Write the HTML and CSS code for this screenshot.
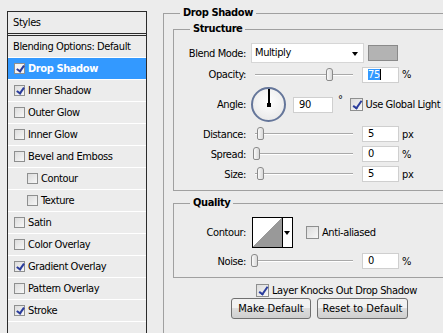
FILE: index.html
```html
<!DOCTYPE html>
<html lang="en">
<head>
  <meta charset="UTF-8">
  <title>Layer Style</title>
  <link rel="stylesheet" href="styles.css">
</head>
<body>
  <aside class="styles-panel">
    <div class="panel-head">Styles</div>
    <ul class="style-list">
      <li class="style-row plain">Blending Options: Default</li>
      <li class="style-row active"><span class="cb checked"></span>Drop Shadow</li>
      <li class="style-row"><span class="cb checked"></span>Inner Shadow</li>
      <li class="style-row"><span class="cb"></span>Outer Glow</li>
      <li class="style-row"><span class="cb"></span>Inner Glow</li>
      <li class="style-row"><span class="cb"></span>Bevel and Emboss</li>
      <li class="style-row sub"><span class="cb"></span>Contour</li>
      <li class="style-row sub"><span class="cb"></span>Texture</li>
      <li class="style-row"><span class="cb"></span>Satin</li>
      <li class="style-row"><span class="cb"></span>Color Overlay</li>
      <li class="style-row"><span class="cb checked"></span>Gradient Overlay</li>
      <li class="style-row"><span class="cb"></span>Pattern Overlay</li>
      <li class="style-row"><span class="cb checked"></span>Stroke</li>
      <li class="style-row"></li>
    </ul>
  </aside>

  <main class="settings">
    <fieldset class="group outer">
      <legend>Drop Shadow</legend>

      <fieldset class="group structure">
        <legend>Structure</legend>

        <div class="row r-blend">
          <span class="lbl">Blend Mode:</span>
          <div class="select">Multiply<span class="arrow"></span></div>
          <span class="swatch"></span>
        </div>

        <div class="row r-opacity">
          <span class="lbl">Opacity:</span>
          <div class="slider"><span class="thumb" style="left: 75px"></span></div>
          <div class="num"><span class="sel">75</span><span class="caret"></span></div>
          <span class="unit">%</span>
        </div>

        <div class="row r-angle">
          <span class="lbl">Angle:</span>
          <div class="dial"><span class="hand"></span><span class="pin"></span></div>
          <div class="num wide">90</div>
          <span class="deg">°</span>
          <span class="cb big checked"></span>
          <span class="cb-text">Use Global Light</span>
        </div>

        <div class="row r-small">
          <span class="lbl">Distance:</span>
          <div class="slider"><span class="thumb" style="left: 6px"></span></div>
          <div class="num">5</div>
          <span class="unit">px</span>
        </div>

        <div class="row r-small">
          <span class="lbl">Spread:</span>
          <div class="slider"><span class="thumb" style="left: 2px"></span></div>
          <div class="num">0</div>
          <span class="unit">%</span>
        </div>

        <div class="row r-small">
          <span class="lbl">Size:</span>
          <div class="slider"><span class="thumb" style="left: 6px"></span></div>
          <div class="num">5</div>
          <span class="unit">px</span>
        </div>
      </fieldset>

      <fieldset class="group quality">
        <legend>Quality</legend>

        <div class="row r-contour">
          <span class="lbl">Contour:</span>
          <div class="contour"><span class="curve"></span><span class="drop"><span class="arrow"></span></span></div>
          <span class="cb big"></span>
          <span class="cb-text">Anti-aliased</span>
        </div>

        <div class="row r-noise">
          <span class="lbl">Noise:</span>
          <div class="slider"><span class="thumb" style="left: 0px"></span></div>
          <div class="num">0</div>
          <span class="unit">%</span>
        </div>
      </fieldset>

      <div class="knockout">
        <span class="cb big checked"></span>
        <span class="cb-text">Layer Knocks Out Drop Shadow</span>
      </div>

      <div class="actions">
        <button class="btn make">Make Default</button>
        <button class="btn reset">Reset to Default</button>
      </div>
    </fieldset>
  </main>
</body>
</html>
```

FILE: styles.css
```css
body {
  margin: 0;
  height: 333px;
  overflow: hidden;
  display: flex;
  align-items: flex-start;
  background-color: #ececec;
  color: #000;
  font-family: "DejaVu Sans Condensed", "DejaVu Sans", "Liberation Sans", sans-serif;
  font-stretch: condensed;
  font-size: 11px;
  letter-spacing: -0.4px;
}

/* left list */
.styles-panel {
  margin: 11px 0 0 7px;
  width: 138px;
  height: 340px;
  border: 1px solid #2b2b2b;
  flex: none;
}
.panel-head {
  height: 21px;
  line-height: 21px;
  padding-left: 5px;
  border-bottom: 1px solid #2b2b2b;
  margin-bottom: 1px;
}
.style-list {
  list-style: none;
  margin: 0;
  padding: 0;
  border-top: 1px solid #2b2b2b;
}
.style-row {
  height: 21px;
  border-bottom: 1px solid #ffffff;
  display: flex;
  align-items: center;
  padding-left: 6px;
}
.style-row.plain {
  padding-left: 5px;
}
.style-row.sub {
  padding-left: 19px;
}
.style-row.active {
  background-color: #3399ff;
  color: #fff;
  font-weight: bold;
}
.style-row .cb {
  margin-right: 3px;
}

/* checkbox */
.cb {
  position: relative;
  flex: none;
  width: 11px;
  height: 11px;
  box-sizing: border-box;
  border: 1px solid #8e8f8f;
  background: linear-gradient(135deg, #dcdcdc, #f7f7f7);
}
.cb.big {
  width: 13px;
  height: 13px;
}
.style-row.active .cb {
  background: #f4f4f4;
}
.cb.checked::after {
  content: "";
  position: absolute;
  left: 3px;
  top: 0;
  width: 3px;
  height: 6px;
  border: solid #2a3c9c;
  border-width: 0 2px 2px 0;
  transform: rotate(35deg);
}
.cb.big.checked::after {
  left: 4px;
  top: 0;
  height: 8px;
}
.cb-text {
  margin-left: 3px;
  white-space: nowrap;
}

/* right side groups */
.settings {
  margin-left: 16px;
  padding-top: 6px;
  flex: none;
}
.group {
  margin: 0;
  border: 1px solid #a0a0a0;
  min-inline-size: 0;
}
.group legend {
  font-weight: bold;
  line-height: 14px;
  padding: 0 3px;
}
.outer {
  width: 320px;
  height: 400px;
  padding: 0 0 0 9px;
}
.outer > legend {
  margin-left: 7px;
}
.structure,
.quality {
  width: 300px;
  padding: 7px 0 8px 0;
}
.structure > legend,
.quality > legend {
  margin-left: 16px;
}
.structure {
  margin-top: 2px;
}
.quality {
  margin-top: 5px;
}

.row {
  display: flex;
  align-items: center;
  margin-top: 4px;
  white-space: nowrap;
}
.row:first-of-type {
  margin-top: 0;
}
.lbl {
  width: 72px;
  flex: none;
  text-align: right;
}
.r-blend { height: 20px; }
.r-opacity { height: 17px; margin-top: 3px; }
.r-angle { height: 35px; }
.r-small { height: 16px; }
.r-contour { height: 31px; }
.r-noise { height: 16px; margin-top: 5px; }

.select {
  position: relative;
  margin-left: 5px;
  width: 113px;
  height: 20px;
  box-sizing: border-box;
  border: 1px solid #d6d6d6;
  background: #fff;
  line-height: 18px;
  padding-left: 3px;
}
.arrow {
  position: absolute;
  right: 5px;
  top: 8px;
  border-left: 3px solid transparent;
  border-right: 3px solid transparent;
  border-top: 4px solid #000;
}
.swatch {
  margin-left: 4px;
  width: 30px;
  height: 16px;
  box-sizing: border-box;
  border: 1px solid #8a8a8a;
  background: #b3b3b3;
}

.slider {
  position: relative;
  margin-left: 5px;
  width: 107px;
  height: 16px;
  flex: none;
}
.slider::before {
  content: "";
  position: absolute;
  left: 4px;
  right: 5px;
  top: 7px;
  height: 1px;
  border-top: 1px solid #a9a9a9;
  background: #fff;
}
.thumb {
  position: absolute;
  top: 1px;
  width: 7px;
  height: 13px;
  box-sizing: border-box;
  border: 1px solid #8a8a8a;
  border-radius: 3px 3px 2px 2px;
  background: linear-gradient(90deg, #fafafa, #d8d8d8);
}

.num {
  margin-left: 4px;
  width: 37px;
  height: 16px;
  box-sizing: border-box;
  border: 1px solid #cfcfcf;
  background: #fff;
  padding-left: 5px;
  line-height: 14px;
  display: flex;
  align-items: center;
}
.num.wide {
  margin-left: 7px;
  width: 40px;
}
.sel {
  background: #3399ff;
  color: #fff;
  line-height: 11px;
}
.caret {
  width: 1px;
  height: 11px;
  background: #000;
}
.unit {
  margin-left: 3px;
}
.deg {
  margin-left: 5px;
  align-self: flex-start;
  margin-top: 6px;
}
.r-angle .cb {
  margin-left: 7px;
}

.dial {
  position: relative;
  margin-left: 5px;
  width: 35px;
  height: 35px;
  box-sizing: border-box;
  border: 2px solid #65769a;
  border-radius: 50%;
  background: radial-gradient(circle at 50% 40%, #ffffff, #e4e4e4);
}
.hand {
  position: absolute;
  left: 15px;
  top: 0;
  width: 2px;
  height: 16px;
  background: #000;
}
.pin {
  position: absolute;
  left: 14px;
  top: 14px;
  width: 4px;
  height: 4px;
  background: #000;
}

.contour {
  margin-left: 6px;
  width: 41px;
  height: 31px;
  box-sizing: border-box;
  border: 1px solid #000;
  display: flex;
  background: #fff;
}
.curve {
  width: 29px;
  border-right: 1px solid #000;
  background: linear-gradient(to bottom right, #fff 50%, #999 50%);
}
.drop {
  position: relative;
  flex: 1;
}
.drop .arrow {
  right: 2px;
  top: 13px;
}
.r-contour .cb {
  margin-left: 13px;
}

.knockout {
  display: flex;
  align-items: center;
  height: 14px;
  margin-top: 5px;
  padding-left: 83px;
}
.actions {
  display: flex;
  gap: 6px;
  margin-top: 1px;
  padding-left: 58px;
}
.btn {
  height: 21px;
  padding: 0;
  border: 1px solid #707070;
  border-radius: 3px;
  background: linear-gradient(#f2f2f2 45%, #dddddd 50%, #cfcfcf);
  font: inherit;
  color: #000;
}
.btn.make { width: 80px; }
.btn.reset { width: 91px; }
```
